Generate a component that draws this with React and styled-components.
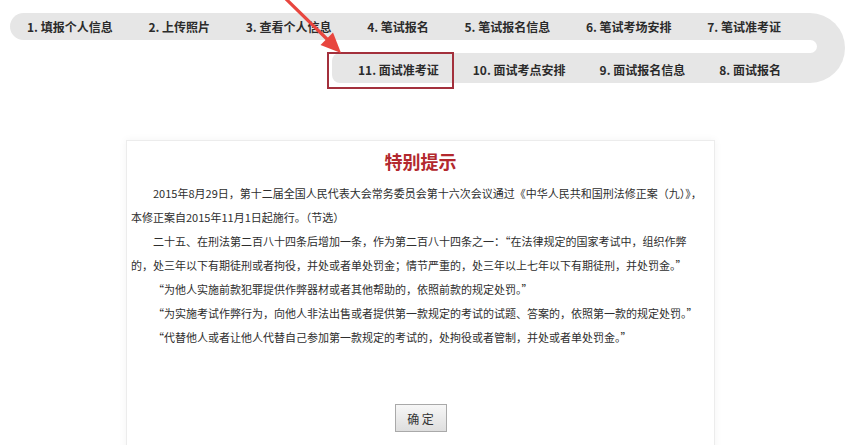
import React from 'react';
import styled, { createGlobalStyle } from 'styled-components';

const topSteps = [
  '1. 填报个人信息',
  '2. 上传照片',
  '3. 查看个人信息',
  '4. 笔试报名',
  '5. 笔试报名信息',
  '6. 笔试考场安排',
  '7. 笔试准考证',
];

const bottomSteps = ['11. 面试准考证', '10. 面试考点安排', '9. 面试报名信息', '8. 面试报名'];

function App() {
  return (
    <>
      <GlobalStyle />
      <Page>
        <Steps>
          <Rows>
            <TopRow>
              {topSteps.map((s) => (
                <Step key={s}>{s}</Step>
              ))}
            </TopRow>
            <BottomRow>
              {bottomSteps.map((s) => (
                <Step key={s}>{s}</Step>
              ))}
            </BottomRow>
          </Rows>
          <Bend />
        </Steps>

        <Highlight />
        <Arrow width="80" height="60" viewBox="270 0 80 60">
          <line x1="285" y1="-2" x2="330" y2="42" stroke="#e8463f" strokeWidth="3.2" strokeLinecap="round" />
          <polygon points="341,53 320.5,45 333,32.5" fill="#e8463f" />
        </Arrow>

        <Card>
          <Title>特别提示</Title>
          <Para>
            2015年8月29日，第十二届全国人民代表大会常务委员会第十六次会议通过《中华人民共和国刑法修正案（九）》，
            <br />
            本修正案自2015年11月1日起施行。（节选）
          </Para>
          <Para>
            二十五、在刑法第二百八十四条后增加一条，作为第二百八十四条之一：“在法律规定的国家考试中，组织作弊
            <br />
            的，处三年以下有期徒刑或者拘役，并处或者单处罚金；情节严重的，处三年以上七年以下有期徒刑，并处罚金。”
          </Para>
          <Para>“为他人实施前款犯罪提供作弊器材或者其他帮助的，依照前款的规定处罚。”</Para>
          <Para>“为实施考试作弊行为，向他人非法出售或者提供第一款规定的考试的试题、答案的，依照第一款的规定处罚。”</Para>
          <Para>“代替他人或者让他人代替自己参加第一款规定的考试的，处拘役或者管制，并处或者单处罚金。”</Para>
          <Actions>
            <OkButton>确 定</OkButton>
          </Actions>
        </Card>
      </Page>
    </>
  );
}

const GlobalStyle = createGlobalStyle`
  body {
    margin: 0;
    background: #fff;
    font-family: "Noto Sans CJK SC", "Liberation Sans", sans-serif;
    color: #333;
  }
`;

const Page = styled.div`
  position: relative;
  width: 865px;
  height: 445px;
  overflow: hidden;
`;

const Steps = styled.nav`
  display: flex;
  width: 835px;
  padding: 13px 0 0 10px;
`;

const Rows = styled.div`
  display: flex;
  flex-direction: column;
  gap: 13px;
  flex: 1;
`;

const TopRow = styled.div`
  height: 27px;
  background: #e6e6e6;
  border-radius: 14px 0 0 14px;
  display: flex;
  align-items: center;
  justify-content: space-between;
  padding: 0 19px 0 17px;
`;

const BottomRow = styled.div`
  align-self: flex-end;
  width: 468px;
  height: 30px;
  box-sizing: border-box;
  background: #e6e6e6;
  border-radius: 8px 0 0 8px;
  display: flex;
  align-items: center;
  justify-content: flex-end;
  gap: 34px;
  padding: 3px 19px 0 0;
`;

const Step = styled.span`
  font-size: 12px;
  font-weight: 700;
  color: #2b2b2b;
  white-space: nowrap;
`;

const Bend = styled.div`
  position: relative;
  width: 45px;
  height: 70px;
  background: #e6e6e6;
  border-radius: 0 35px 35px 0;

  &::before {
    content: '';
    position: absolute;
    left: 0;
    top: 27px;
    width: 17px;
    height: 13px;
    background: #fff;
    border-radius: 0 7px 7px 0;
  }
`;

const Highlight = styled.div`
  position: absolute;
  left: 327px;
  top: 52px;
  width: 123px;
  height: 33px;
  border: 2px solid #a3303c;
`;

const Arrow = styled.svg`
  position: absolute;
  left: 270px;
  top: 0;
`;

const Card = styled.div`
  margin: 57px 0 0 126px;
  width: 589px;
  box-sizing: border-box;
  border: 1px solid #ececec;
  box-shadow: 0 0 8px rgba(0, 0, 0, 0.05);
  padding: 5px 4px 30px;
  background: #fff;
`;

const Title = styled.h2`
  margin: 0 0 5px;
  text-align: center;
  font-size: 18px;
  line-height: 30px;
  font-weight: 700;
  color: #b3282d;
`;

const Para = styled.p`
  margin: 0;
  font-size: 11px;
  line-height: 24px;
  text-indent: 22px;
  white-space: nowrap;
  color: #2e2e2e;
`;

const Actions = styled.div`
  display: flex;
  justify-content: center;
  padding: 55px 0 0;
`;

const OkButton = styled.button`
  width: 52px;
  height: 28px;
  border: 1px solid #a9a9a9;
  background: linear-gradient(#f7f7f7, #dedede);
  font-family: "Noto Sans CJK SC", sans-serif;
  font-size: 12px;
  color: #333;
  padding: 0;
  cursor: pointer;
`;

export default App;
